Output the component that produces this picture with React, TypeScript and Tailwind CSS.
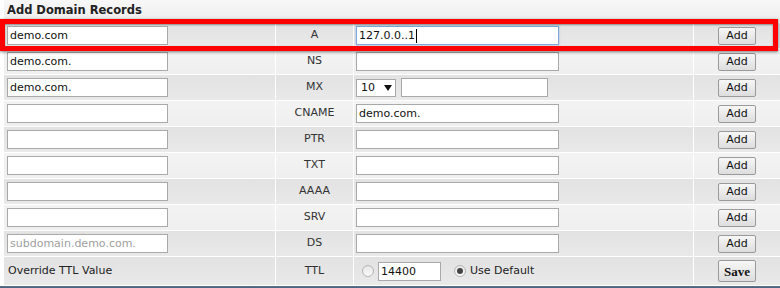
import React from "react";

const font = { fontFamily: '"DejaVu Sans", Verdana, sans-serif' };

function Box({ w, text, placeholder, className = "" }: { w: number; text?: string; placeholder?: string; className?: string }) {
  return (
    <div
      className={`h-[19px] border border-[#a9a9a9] bg-white flex items-center pl-[2px] text-[11px] leading-none text-[#111] overflow-hidden whitespace-nowrap ${className}`}
      style={{ width: w }}
    >
      {text ? <span>{text}</span> : placeholder ? <span className="text-[#a0a0a0]">{placeholder}</span> : null}
    </div>
  );
}

function AddBtn({ label = "Add" }: { label?: string }) {
  return (
    <div className="h-[18px] w-[38px] rounded-[2px] border border-[#9a9a9a] bg-gradient-to-b from-[#f7f7f7] to-[#dddddd] flex items-center justify-center text-[11px] leading-none text-[#111]">
      {label}
    </div>
  );
}

function Row({
  dark,
  c1,
  type,
  c3,
  c4,
  last = false,
}: {
  dark: boolean;
  c1: React.ReactNode;
  type: string;
  c3: React.ReactNode;
  c4: React.ReactNode;
  last?: boolean;
}) {
  const bg = dark
    ? "bg-gradient-to-b from-[#e2e2e2] to-[#e9e9e9]"
    : "bg-gradient-to-b from-[#f3f3f3] to-[#efefef]";
  return (
    <div className={`flex gap-[1px] ${last ? "h-[28px]" : "h-[25px] mb-[1px]"}`}>
      <div className={`w-[271px] ${bg} flex items-center pl-[3px]`}>{c1}</div>
      <div className={`w-[77px] ${bg} flex items-center justify-center text-[11px] text-[#333]`}>{type}</div>
      <div className={`w-[339px] ${bg} flex items-center pl-[2px]`}>{c3}</div>
      <div className={`flex-1 ${bg} flex items-center justify-center`}>{c4}</div>
    </div>
  );
}

function Radio({ checked }: { checked?: boolean }) {
  return (
    <div className="w-[12px] h-[12px] rounded-full border border-[#b5b5b5] bg-gradient-to-b from-[#e6e6e6] to-[#fafafa] flex items-center justify-center">
      {checked ? <div className="w-[6px] h-[6px] rounded-full bg-[#444]" /> : null}
    </div>
  );
}

export default function App() {
  return (
    <div className="relative w-[780px] h-[288px] bg-white overflow-hidden" style={font}>
      <div className="pl-[4px]">
        <div className="h-[22px] mb-[1px] bg-gradient-to-b from-[#f8f8f8] to-[#ededed] flex items-center pl-[3px] text-[11.5px] font-bold text-[#222]">
          Add Domain Records
        </div>
        <Row
          dark
          c1={<Box w={161} text="demo.com" />}
          type="A"
          c3={
            <div className="h-[19px] w-[203px] border border-[#7fa8d8] bg-white flex items-center pl-[2px] text-[11px] leading-none text-[#111] shadow-[0_0_2px_rgba(90,150,220,0.6)]">
              <span>127.0.0..1</span>
              <span className="inline-block w-[1px] h-[14px] bg-black ml-[1px]" />
            </div>
          }
          c4={<AddBtn />}
        />
        <Row dark={false} c1={<Box w={161} text="demo.com." />} type="NS" c3={<Box w={203} />} c4={<AddBtn />} />
        <Row
          dark
          c1={<Box w={161} text="demo.com." />}
          type="MX"
          c3={
            <div className="flex items-center gap-[5px]">
              <div className="h-[18px] w-[40px] border border-[#a9a9a9] bg-white flex items-center pl-[4px] text-[11px] leading-none text-[#111]">
                <span>10</span>
                <svg width="8" height="6" viewBox="0 0 8 6" className="ml-[9px]">
                  <path d="M0 0 H8 L4 6 Z" fill="#111" />
                </svg>
              </div>
              <Box w={147} />
            </div>
          }
          c4={<AddBtn />}
        />
        <Row dark={false} c1={<Box w={161} />} type="CNAME" c3={<Box w={203} text="demo.com." />} c4={<AddBtn />} />
        <Row dark c1={<Box w={161} />} type="PTR" c3={<Box w={203} />} c4={<AddBtn />} />
        <Row dark={false} c1={<Box w={161} />} type="TXT" c3={<Box w={203} />} c4={<AddBtn />} />
        <Row dark c1={<Box w={161} />} type="AAAA" c3={<Box w={203} />} c4={<AddBtn />} />
        <Row dark={false} c1={<Box w={161} />} type="SRV" c3={<Box w={203} />} c4={<AddBtn />} />
        <Row dark c1={<Box w={161} placeholder="subdomain.demo.com." />} type="DS" c3={<Box w={203} />} c4={<AddBtn />} />
        <Row
          dark
          last
          c1={<span className="text-[11px] text-[#222] pl-[1px]">Override TTL Value</span>}
          type="TTL"
          c3={
            <div className="flex items-center pl-[6px]">
              <Radio />
              <Box w={63} text="14400" className="ml-[4px]" />
              <div className="ml-[13px]">
                <Radio checked />
              </div>
              <span className="ml-[4px] text-[11px] text-[#222]">Use Default</span>
            </div>
          }
          c4={
            <div className="h-[22px] w-[38px] rounded-[2px] border border-[#9a9a9a] bg-gradient-to-b from-[#f7f7f7] to-[#dddddd] flex items-center justify-center text-[13px] font-bold leading-none text-[#111]" style={{ fontFamily: '"Liberation Serif", serif' }}>
              Save
            </div>
          }
        />
      </div>
      <div className="h-[3px] mt-[1px] bg-gradient-to-b from-[#5b7590] to-[#3f566e]" />
      <div className="absolute left-0 top-[19px] w-[778px] h-[32px] border-[5px] border-[#ff0000] shadow-[0_1px_3px_rgba(0,0,0,0.5),inset_0_1px_2px_rgba(0,0,0,0.4)]" />
    </div>
  );
}
